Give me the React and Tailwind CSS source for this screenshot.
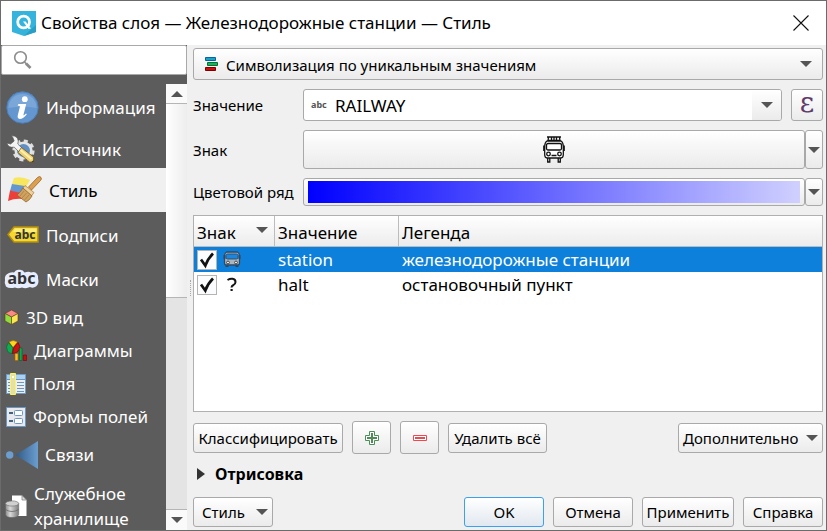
import React, { useState } from "react";

const BTN =
  "rounded-[3px] border border-[#a9a9a9] bg-linear-to-b from-white to-[#ebebeb]";

function Arrow() {
  return (
    <svg width="12" height="6" viewBox="0 0 12 6" className="shrink-0" aria-hidden="true">
      <path d="M0 0H12L6 6Z" fill="#555" />
    </svg>
  );
}

function Logo() {
  return (
    <svg width="24" height="25" viewBox="0 0 24 25" aria-hidden="true">
      <path d="M0 0H24V21L12 25L0 21Z" fill="#34b4dc" />
      <path d="M12 25L24 21V14L17 20Z" fill="#2a9fc6" />
      <circle cx="11.6" cy="11" r="5.9" fill="none" stroke="#fff" strokeWidth="2.8" />
      <path d="M11 10.6L13.6 10.6L19 17.4L16.6 18Z" fill="#fff" />
    </svg>
  );
}

function SearchIcon() {
  return (
    <svg width="20" height="20" viewBox="0 0 20 20" fill="none" aria-hidden="true">
      <circle cx="8.500" cy="7.500" r="5.800" stroke="#8c8c8c" strokeWidth="1.600" />
      <path d="M12.500 12L14.500 14" stroke="#8c8c8c" strokeWidth="1.600" />
      <path d="M14 13.500L18.500 18" stroke="#8c8c8c" strokeWidth="2.800" />
    </svg>
  );
}

function InfoIcon() {
  return (
    <svg width="33" height="33" viewBox="0 0 33 33" aria-hidden="true">
      <circle cx="16.5" cy="16.5" r="15.7" fill="#6497d0" stroke="#4a80bf" />
      <path d="M2.5 17A14 14 0 0 1 30.5 17Q17 14 2.5 17Z" fill="#7aa6d8" />
      <circle cx="18.8" cy="8.2" r="2.9" fill="#fff" />
      <path d="M12.5 13H20.2L17.3 24.5Q18.6 24 20 22.4L20.8 23.3Q17.5 28 13.6 28Q11 27.4 11.8 24.2L14 15.2L11.6 14.5Z" fill="#fff" />
    </svg>
  );
}

function SourceIcon() {
  return (
    <svg width="29" height="28" viewBox="0 0 29 28" aria-hidden="true">
      <circle cx="17.500" cy="15.500" r="9.600" fill="none" stroke="#dedede" strokeWidth="3" strokeDasharray="4 3.540" />
      <circle cx="17.500" cy="15.500" r="7.800" fill="#5f8fc4" stroke="#e4e4e4" strokeWidth="2.600" />
      <path d="M5.500 .8Q11.500 .5 12.300 6L11.800 9L18.500 15.500L15 19L8.300 12.200Q2.400 13.200 .8 8L4.600 9L8.200 6L6.800 2.500Z" fill="#f3f3f3" stroke="#555" strokeWidth=".7" />
      <path d="M15.500 12.500L27.500 22V27H23.500L12 17.500Z" fill="#f0d274" stroke="#6b5b25" strokeWidth=".8" />
      <path d="M14.500 15L25.500 24" stroke="#fff0b0" strokeWidth="1.800" />
      <path d="M25.500 27H27.500V25Z" fill="#333" />
    </svg>
  );
}

function StyleIcon() {
  return (
    <svg width="34" height="28" viewBox="0 0 34 28" aria-hidden="true">
      <path d="M6 2Q13 0 22 4L18 11L4 8Z" fill="#f8e65c" />
      <path d="M4 8L17 10L14 18L2 15Z" fill="#6496cf" />
      <path d="M2 14.500L13 17L15 23Q7 22 0 25Z" fill="#ee3e39" />
      <path d="M20.500 11L29.500 1.500Q32 -.5 33 1.500Q34 3 32.500 4.500L23.500 14Z" fill="#dda050" stroke="#9b6421" strokeWidth=".8" />
      <path d="M17 9.500L26 16.500L23.500 20L15 12Z" fill="#edd09c" stroke="#a87839" strokeWidth=".7" />
      <path d="M14.800 12L24 20Q22 24 18 26L9 19Q13 16 14.800 12Z" fill="#d0a260" stroke="#94682f" strokeWidth=".8" />
      <path d="M16 15L12 20M18.500 17L14 22M21 19L16.500 24" stroke="#a0743a" strokeWidth=".6" />
    </svg>
  );
}

function LabelsIcon() {
  return (
    <svg width="32" height="18" viewBox="0 0 32 18" aria-hidden="true">
      <path d="M7 1H31V16H7L1 8.500Z" fill="#f3d72e" stroke="#b58e0d" strokeWidth="1.500" />
      <path d="M8 2.500H29.500V6H6Z" fill="#fbed78" />
      <text x="18" y="12.500" textAnchor="middle" fontFamily="Noto Sans" fontWeight="700" fontSize="12" fill="#333">abc</text>
    </svg>
  );
}

function MaskIcon() {
  return (
    <svg width="35" height="24" viewBox="0 -2 35 24" className="overflow-visible" aria-hidden="true">
      <path d="M5 4Q8 3 10 3.500Q12 0 15.500 .8Q19 .5 20.500 3.500Q25 2 27 3.500Q31 2 33 5Q34.500 7 34 9Q35.500 15 32 17.500Q29 19.500 26 18Q22 20 18 18.500Q14 20 11 18.500Q5 20 2 17.500Q0 14 1 11Q0 6 5 4Z" fill="#e6edff" />
      <text x="17.500" y="15" textAnchor="middle" fontFamily="Noto Sans" fontWeight="700" fontSize="16" fill="#333">abc</text>
    </svg>
  );
}

function CubeIcon() {
  return (
    <svg width="15" height="17" viewBox="0 0 15 17" stroke="#5f3a20" strokeWidth=".6" aria-hidden="true">
      <path d="M7.500 1L14 4.500L7.500 8L1 4.500Z" fill="#fa8a86" />
      <path d="M1 4.500L7.500 8V15.500L1 12Z" fill="#8ede3b" />
      <path d="M14 4.500L7.500 8V15.500L14 12Z" fill="#fbe653" />
    </svg>
  );
}

function ChartIcon() {
  return (
    <svg width="21" height="22" viewBox="0 0 21 22" aria-hidden="true">
      <path d="M7 7.500L3 2Q7 -1 11.500 2Z" fill="#ffd51a" stroke="#9b6c00" strokeWidth=".6" />
      <path d="M7 8L2.500 2.500Q-.8 7 1.500 11Q3 13.500 6 13.500Z" fill="#0ead55" stroke="#006325" strokeWidth=".6" />
      <path d="M7.500 8L12 2.500Q15 6.500 13 10.500Q10 13.500 6.500 13.500Z" fill="#cb1111" stroke="#700" strokeWidth=".6" />
      <path d="M9 13.500H12V20.500H9Z" fill="#ffb91e" stroke="#a75c00" strokeWidth=".6" />
      <path d="M13.500 8H16V20.500H13.500Z" fill="#09ad4e" stroke="#006325" strokeWidth=".6" />
      <path d="M17.300 15H20.500V20.500H17.300Z" fill="#c90d0d" stroke="#700" strokeWidth=".6" />
    </svg>
  );
}

function FieldsIcon() {
  return (
    <svg width="20" height="22" viewBox="0 0 20 22" aria-hidden="true">
      <path d="M.5 1.500H19.500V20.500H.5Z" fill="#eee" stroke="#6b9dcd" />
      <path d="M1 2H19V6H1Z" fill="#acd0ed" />
      <path d="M1 6.500H19M11 9.500H18M11 12.500H18M11 15.500H18M11 18.500H18M2 9.500H4M2 12.500H4M2 15.500H4M2 18.500H4" stroke="#6797c4" />
      <path d="M4.500 .5H9.500V21.500H4.500Z" fill="#e4dfb0" stroke="#fbf75a" />
      <path d="M6 3H8V5H6Z" fill="#fff" />
    </svg>
  );
}

function FormIcon() {
  return (
    <svg width="20" height="20" viewBox="0 0 20 20" aria-hidden="true">
      <path d="M.5 .5H19.500V19.500H.5Z" fill="#e7e9ec" stroke="#6998c5" />
      <path d="M3 6H7M3 14H7" stroke="#46617b" strokeWidth="2" />
      <rect x="8.500" y="3.500" width="8" height="5" rx="1" fill="#fff" stroke="#6998c5" />
      <rect x="8.500" y="11.500" width="8" height="5" rx="1" fill="#fff" stroke="#6998c5" />
    </svg>
  );
}

function JoinIcon() {
  return (
    <svg width="32" height="28" viewBox="0 0 32 28" aria-hidden="true">
      <defs>
        <linearGradient id="join" x1="0" x2="1">
          <stop stopColor="#315a87" />
          <stop offset="1" stopColor="#6b9ed0" />
        </linearGradient>
      </defs>
      <circle cx="3.700" cy="14" r="3.700" fill="#6b9dce" />
      <path d="M9.500 14L32 0V28Z" fill="url(#join)" />
    </svg>
  );
}

function StorageIcon() {
  return (
    <svg width="22" height="23" viewBox="0 0 22 23" aria-hidden="true">
      <defs>
        <linearGradient id="drum" x1="0" x2="1">
          <stop stopColor="#8a8a8a" />
          <stop offset=".35" stopColor="#dadada" />
          <stop offset="1" stopColor="#7a7a7a" />
        </linearGradient>
      </defs>
      <path d="M7 .5H17L21.500 5V21H7Z" fill="#fff" />
      <path d="M17 .5V5H21.500Z" fill="#ddd" stroke="#777" strokeWidth=".7" />
      <path d="M.5 8.500V19.500Q1 22.500 7 22.500T13.700 19.500V8.500Z" fill="url(#drum)" stroke="#666" strokeWidth=".6" />
      <ellipse cx="7.100" cy="8.500" rx="6.600" ry="2.600" fill="#d0d0d0" stroke="#777" strokeWidth=".7" />
      <path d="M.5 14.500Q7 18.500 13.700 14.500" fill="none" stroke="#666" strokeWidth=".8" />
    </svg>
  );
}

const ITEMS = [
  { label: "Информация", icon: <InfoIcon />, row: "h-[46px] pl-[5px]" },
  { label: "Источник", icon: <SourceIcon />, row: "h-[38px] pl-[5px]" },
  { label: "Стиль", icon: <StyleIcon />, row: "h-11 pl-[7px]" },
  { label: "Подписи", icon: <LabelsIcon />, row: "h-[46px] pl-[6px]" },
  { label: "Маски", icon: <MaskIcon />, row: "h-[42px] pl-[3px]" },
  { label: "3D вид", icon: <CubeIcon />, row: "h-[34px] pl-[3px]" },
  { label: "Диаграммы", icon: <ChartIcon />, row: "h-[33px] pl-[5px]" },
  { label: "Поля", icon: <FieldsIcon />, row: "h-[33px] pl-[5px]" },
  { label: "Формы полей", icon: <FormIcon />, row: "h-[33px] pl-[5px]" },
  { label: "Связи", icon: <JoinIcon />, row: "h-[43px] pl-[5px]" },
  { label: "Служебное хранилище", icon: <StorageIcon />, row: "h-[60px] pl-[4px]" },
];

function Sidebar() {
  const [active, setActive] = useState("Стиль");
  return (
    <aside className="flex w-[186px] shrink-0 flex-col bg-[#5c5c5c]">
      <label className="flex h-[30px] shrink-0 items-center gap-1 rounded-[2px] border border-[#a9a9a9] bg-white pl-[10px]">
        <SearchIcon />
        <input type="search" aria-label="Поиск" className="min-w-0 flex-1 bg-transparent outline-none" />
      </label>
      <div className="mt-[9px] flex min-h-0 flex-1">
        <nav className="min-w-0 flex-1 overflow-hidden">
          {ITEMS.map((item) => (
            <button
              key={item.label}
              type="button"
              onClick={() => setActive(item.label)}
              className={`flex w-full items-center gap-[7px] text-left text-[17px] leading-[25px] ${item.row} ${
                active === item.label ? "bg-[#f0f0f0] text-black" : "text-white"
              }`}
            >
              <span className="shrink-0">{item.icon}</span>
              <span>{item.label}</span>
            </button>
          ))}
        </nav>
        <div className="flex w-[21px] shrink-0 flex-col bg-[#e4e4e4]">
          <button type="button" aria-label="Вверх" className="flex h-5 items-center justify-center border-b border-[#b5b5b5] bg-[#fafafa]">
            <span className="rotate-180"><Arrow /></span>
          </button>
          <div className="h-[194px] border-b border-[#b5b5b5] bg-linear-to-r from-white to-[#ededed]" />
          <div className="flex-1" />
          <button type="button" aria-label="Вниз" className="flex h-[21px] items-center justify-center border-t border-[#b5b5b5] bg-[#fafafa]">
            <Arrow />
          </button>
        </div>
      </div>
    </aside>
  );
}

function CategoriesIcon() {
  return (
    <svg width="14" height="15" viewBox="0 0 14 15" className="shrink-0" aria-hidden="true">
      <path d="M.5 .5H10.500V3.500H.5Z" fill="#13a5c3" stroke="#0861a7" />
      <path d="M2.500 5.500H12.500V8.500H2.500Z" fill="#14b55a" stroke="#08713a" />
      <path d="M.5 10.500H10.500V13.500H.5Z" fill="#c90d0d" stroke="#790000" />
    </svg>
  );
}

function BusIcon() {
  return (
    <svg width="22" height="27" viewBox="0 0 22 27" fill="none" stroke="#111" strokeWidth="1.300" aria-hidden="true">
      <path d="M4 1H18M5.500 1L5 5M16.500 1L17 5M8.500 1.500V4M11 1.500V4M13.500 1.500V4M5 4.300H17" />
      <path d="M4 5H18Q20 6 20.300 10V19Q20 22 18 22H4Q2 22 1.700 19V10Q2 6 4 5Z" fill="#fff" />
      <rect x="3.500" y="7.500" width="15" height="6.500" rx="1.500" />
      <circle cx="5.500" cy="18" r="1.800" />
      <circle cx="16.500" cy="18" r="1.800" />
      <path d="M8.500 19.500H13.500M.8 9.500V15M21.200 9.500V15" />
      <path d="M4.700 22V26H6.800V22M15.200 22V26H17.300V22" />
    </svg>
  );
}

function SmallBusIcon() {
  return (
    <svg width="18" height="17" viewBox="0 0 18 17" aria-hidden="true">
      <path d="M3.500 1H14.500Q16.500 2 16.500 5V12Q16.500 14 15 14H3Q1.500 14 1.500 12V5Q1.500 2 3.500 1Z" fill="#a9b6c0" stroke="#2c4a66" strokeWidth="1.300" />
      <rect x="3" y="3" width="12" height="5" rx="1.500" fill="#1a86de" stroke="#2c4a66" strokeWidth=".9" />
      <path d="M1.500 4V8M16.500 4V8" stroke="#2c4a66" strokeWidth="2" />
      <circle cx="5" cy="11.500" r="1.400" fill="#fff" stroke="#333" strokeWidth=".9" />
      <circle cx="13" cy="11.500" r="1.400" fill="#fff" stroke="#333" strokeWidth=".9" />
      <path d="M2.500 15.300H5.500M12.500 15.300H15.500" stroke="#39444d" strokeWidth="1.600" />
    </svg>
  );
}

function QuestionIcon() {
  return (
    <svg width="18" height="17" viewBox="0 0 18 17" fill="none" aria-hidden="true">
      <path d="M4.500 4Q7 2.500 9.500 2.800Q12.500 3.200 12.500 6Q12.500 7.800 10.500 9Q8.500 10 8.500 11.500" stroke="#161616" strokeWidth="2" />
      <path d="M7.500 13H9.700V15H7.500Z" fill="#161616" />
    </svg>
  );
}

function Check({ label }) {
  const [on, setOn] = useState(true);
  return (
    <span className="grid size-5 shrink-0">
      <input
        type="checkbox"
        aria-label={label}
        checked={on}
        onChange={() => setOn(!on)}
        className="col-start-1 row-start-1 size-5 appearance-none border border-[#b4b4b4] bg-[#fafcfe]"
      />
      {on && (
        <svg viewBox="0 0 20 20" className="pointer-events-none col-start-1 row-start-1 size-5" fill="none" aria-hidden="true">
          <path d="M4 9.500L8.300 15.500Q10.500 9 16 3.500" stroke="#111" strokeWidth="2.700" />
        </svg>
      )}
    </span>
  );
}

const CLASSES = [
  { value: "station", legend: "железнодорожные станции", icon: <SmallBusIcon /> },
  { value: "halt", legend: "остановочный пункт", icon: <QuestionIcon /> },
];

function ClassTable() {
  const [selected, setSelected] = useState("station");
  const th = "h-[31px] border-b border-[#bcbcbc] pt-[3px] text-left font-normal";
  return (
    <div className="min-h-[120px] flex-1 border border-[#b0b0b0] bg-white text-[17px] leading-6">
      <table className="w-full table-fixed border-separate border-spacing-0">
        <colgroup>
          <col className="w-[81px]" />
          <col className="w-[124px]" />
          <col />
        </colgroup>
        <thead className="bg-linear-to-b from-white to-[#ebebeb]">
          <tr>
            <th className={`${th} border-r pl-[3px]`}>
              <span className="flex items-start justify-between pr-[6px]">
                Знак
                <span className="pt-[6px] leading-none"><Arrow /></span>
              </span>
            </th>
            <th className={`${th} border-r pl-[3px]`}>Значение</th>
            <th className={`${th} pl-[3px]`}>Легенда</th>
          </tr>
        </thead>
        <tbody>
          {CLASSES.map((c) => (
            <tr
              key={c.value}
              onClick={() => setSelected(c.value)}
              className={selected === c.value ? "bg-[#0d80dc] text-white" : "text-black"}
            >
              <td className="h-[25px] pl-[3px]">
                <span className="flex items-center gap-[6px]">
                  <Check label={c.value} />
                  {c.icon}
                </span>
              </td>
              <td className="pt-px pl-[3px]">{c.value}</td>
              <td className="pt-px pl-[3px]">{c.legend}</td>
            </tr>
          ))}
        </tbody>
      </table>
    </div>
  );
}

function StylePanel() {
  return (
    <main className="flex min-w-0 flex-1 flex-col pt-[3px] pr-[3px] pb-[3px] text-[15px] leading-5">
      <div className={`flex h-8 shrink-0 items-center gap-[7px] pr-[10px] pl-[11px] ${BTN}`}>
        <CategoriesIcon />
        <select aria-label="Символизация" className="h-full min-w-0 flex-1 appearance-none bg-transparent pt-px outline-none">
          <option>Символизация по уникальным значениям</option>
        </select>
        <Arrow />
      </div>

      <div className="mt-[9px] flex h-8 items-center">
        <label htmlFor="value" className="w-[110px] shrink-0">Значение</label>
        <div className="flex h-8 min-w-0 flex-1 items-center overflow-hidden rounded-[3px] border border-[#a9a9a9] bg-white">
          <span className="w-[31px] shrink-0 pl-[7px] text-[9px] leading-3 font-bold text-[#555]">abc</span>
          <input id="value" defaultValue="RAILWAY" className="h-full min-w-0 flex-1 bg-transparent pt-px text-[17px] outline-none" />
          <button type="button" aria-label="Выбрать поле" className="flex h-full w-[29px] items-center justify-center bg-linear-to-b from-white to-[#ebebeb]">
            <Arrow />
          </button>
        </div>
        <button
          type="button"
          aria-label="Выражение"
          className={`ml-[9px] flex size-8 shrink-0 items-center justify-center pb-1 font-['DejaVu_Serif'] text-[28px] leading-6 text-[#603a6b] ${BTN}`}
        >
          ε
        </button>
      </div>

      <div className="mt-[9px] flex h-[39px] items-center">
        <label htmlFor="symbol" className="w-[110px] shrink-0">Знак</label>
        <button id="symbol" type="button" aria-label="Знак" className={`flex h-full flex-1 items-center justify-center ${BTN}`}>
          <BusIcon />
        </button>
        <button type="button" aria-label="Меню знака" className={`flex h-full w-[18px] items-center justify-center ${BTN}`}>
          <Arrow />
        </button>
      </div>

      <div className="mt-[9px] flex h-7 items-center">
        <label htmlFor="ramp" className="w-[110px] shrink-0 whitespace-nowrap">Цветовой ряд</label>
        <button id="ramp" type="button" aria-label="Цветовой ряд" className={`flex h-full flex-1 px-1 py-[2px] ${BTN}`}>
          <span className="h-full flex-1 bg-linear-to-r/srgb from-[#0000ff] to-[#d0d0ff]" />
        </button>
        <button type="button" aria-label="Меню цветового ряда" className={`flex h-full w-[18px] items-center justify-center ${BTN}`}>
          <Arrow />
        </button>
      </div>

      <div className="mt-[9px] flex min-h-0 flex-1 flex-col">
        <ClassTable />
      </div>

      <div className="mt-[9px] flex h-[33px] items-center">
        <button type="button" className={`h-[30px] w-[150px] ${BTN}`}>Классифицировать</button>
        <button type="button" aria-label="Добавить" className={`ml-[9px] flex h-[33px] w-[39px] items-center justify-center ${BTN}`}>
          <svg width="14" height="14" viewBox="0 0 14 14" aria-hidden="true">
            <path d="M4.500 .5H9.500V4.500H13.500V9.500H9.500V13.500H4.500V9.500H.5V4.500H4.500Z" fill="#fff" stroke="#4e8e56" />
            <path d="M7 2V12M2 7H12" stroke="#4e8e56" strokeWidth="2" />
          </svg>
        </button>
        <button type="button" aria-label="Удалить" className={`ml-[9px] flex h-[33px] w-[39px] items-center justify-center ${BTN}`}>
          <svg width="14" height="6" viewBox="0 0 14 6" aria-hidden="true">
            <path d="M.5 .5H13.500V5.500H.5Z" fill="#fff" stroke="#e94b50" />
            <path d="M2 3H12" stroke="#e94b50" strokeWidth="2" />
          </svg>
        </button>
        <button type="button" className={`ml-[9px] h-[30px] w-[99px] ${BTN}`}>Удалить всё</button>
        <button type="button" className={`ml-auto flex h-[30px] w-[145px] items-center justify-between px-1 ${BTN}`}>
          Дополнительно
          <Arrow />
        </button>
      </div>

      <button type="button" className="mt-[9px] flex h-[22px] items-center gap-[10px] pl-1 text-left text-[16px] font-bold">
        <svg width="8" height="12" viewBox="0 0 8 12" aria-hidden="true">
          <path d="M0 0L8 6L0 12Z" fill="#333" />
        </svg>
        Отрисовка
      </button>

      <div className="mt-3 flex h-[30px] items-center gap-[9px]">
        <button type="button" className={`mr-auto flex h-full w-20 items-center justify-between pr-1 pl-2 ${BTN}`}>
          Стиль
          <Arrow />
        </button>
        <button type="button" className="h-full w-20 rounded-[3px] border border-[#3ba0f0] bg-linear-to-b from-white to-[#e1e8ef]">OK</button>
        <button type="button" className={`h-full w-20 ${BTN}`}>Отмена</button>
        <button type="button" className={`h-full w-[92px] ${BTN}`}>Применить</button>
        <button type="button" className={`h-full w-20 ${BTN}`}>Справка</button>
      </div>
    </main>
  );
}

export default function App() {
  return (
    <div className="flex h-screen flex-col border border-[#6b6b6b] bg-[#f0f0f0] font-['Noto_Sans','Open_Sans',sans-serif] text-black">
      <header className="flex h-11 shrink-0 items-center bg-white pr-[17px] pl-[11px]">
        <Logo />
        <h1 className="ml-[5px] text-[17px] leading-6">Свойства слоя — Железнодорожные станции — Стиль</h1>
        <button type="button" aria-label="Закрыть" className="ml-auto">
          <svg width="16" height="16" viewBox="0 0 16 16" aria-hidden="true">
            <path d="M.5 .5L15.500 15.500M15.500 .5L.5 15.500" stroke="#111" strokeWidth="1.100" />
          </svg>
        </button>
      </header>
      <div className="flex min-h-0 flex-1">
        <Sidebar />
        <div className="flex w-[6px] shrink-0 items-center justify-center">
          <span className="h-4 border-l border-dotted border-[#a8a8a8]" />
        </div>
        <StylePanel />
      </div>
    </div>
  );
}
